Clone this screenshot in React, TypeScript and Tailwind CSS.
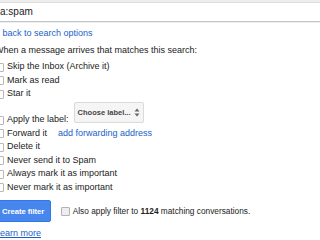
import React from 'react';

// Gmail "create filter" options panel, cropped on the left edge
function Check({ muted = false }: { muted?: boolean }) {
  return (
    <span
      className={
        muted
          ? 'inline-block w-[9px] h-[9px] shrink-0 border border-[#b3b3b3] bg-[#eeeeee] rounded-[1px]'
          : 'inline-block w-[9px] h-[9px] shrink-0 border border-[#b8b8b8] bg-white rounded-[1px]'
      }
    />
  );
}

function Row({ label, children }: { label: string; children?: React.ReactNode }) {
  return (
    <div className="flex items-center h-[13.5px] gap-[3px]">
      <Check />
      <span>{label}</span>
      {children}
    </div>
  );
}

export default function App() {
  const actions = ['Delete it', 'Never send it to Spam', 'Always mark it as important', 'Never mark it as important'];

  return (
    <div className="w-[320px] h-[240px] overflow-hidden bg-white text-[#222] font-['Liberation_Sans',Arial,sans-serif]">
      {/* search box */}
      <div className="h-[3px] bg-[#eeeeee] border-b border-[#dddddd]" />
      <div className="h-[19px] flex items-center border-b border-[#c4c4c4] text-[10px] leading-none">a:spam</div>
      <div className="h-[1px] bg-[#efefef]" />

      <div className="-ml-[5px] pt-[4.25px] text-[9px] leading-[13.5px]">
        <div className="text-[#1a5fc8]">« back to search options</div>
        <div className="mt-[3.5px]">When a message arrives that matches this search:</div>

        <div className="mt-[2.5px]">
          <Row label="Skip the Inbox (Archive it)" />
          <Row label="Mark as read" />
          <Row label="Star it" />

          <div className="flex items-end h-[26px]">
            <div className="flex items-center h-[13.5px] gap-[3px]">
              <Check />
              <span>Apply the label:</span>
            </div>
            <div className="ml-[5px] mb-[3.5px] h-[21px] w-[70px] flex items-center justify-between px-[3px] bg-[#f5f5f5] border border-[#dadada] rounded-[2px] text-[7.5px] font-bold text-[#444]">
              <span>Choose label...</span>
              <svg width="6" height="9" viewBox="0 0 6 9" className="shrink-0">
                <path d="M3 0.5 L5.5 3.5 H0.5 Z" fill="#666" />
                <path d="M3 8.5 L5.5 5.5 H0.5 Z" fill="#666" />
              </svg>
            </div>
          </div>

          <Row label="Forward it">
            <span className="ml-[8px] text-[#1a5fc8]">add forwarding address</span>
          </Row>
          {actions.map((a) => (
            <Row key={a} label={a} />
          ))}
        </div>

        <div className="mt-[6px] flex items-center h-[22px]">
          <button className="h-[22px] pl-[6px] pr-[6px] bg-[#4787ed] border border-[#3079ed] rounded-[2px] text-white font-bold text-[7.6px]">
            Create filter
          </button>
          <div className="ml-[10px] flex items-center gap-[2.5px] text-[8.3px]">
            <Check muted />
            <span>
              Also apply filter to <b>1124</b> matching conversations.
            </span>
          </div>
        </div>

        <div className="mt-[4.25px] text-[#1a5fc8] underline">Learn more</div>
      </div>
    </div>
  );
}
